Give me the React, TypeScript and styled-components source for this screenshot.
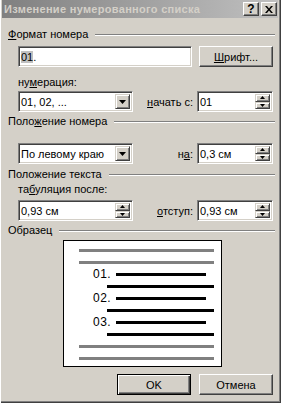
import styled, { createGlobalStyle } from "styled-components";

const GlobalStyle = createGlobalStyle`
  html, body { margin: 0; padding: 0; background: #d4d0c8; }
  body { font-family: "Liberation Sans", Arial, sans-serif; font-size: 11px; color: #000; }
`;

const Window = styled.div`
  width: 281px;
  height: 403px;
  box-sizing: border-box;
  padding: 0 3px 3px 2px;
  background: #d4d0c8;
  box-shadow: inset 1px 0 0 #fff, inset -1px -1px 0 #404040, inset -2px -2px 0 #808080;
  display: flex;
  flex-direction: column;
`;

const TitleBar = styled.div`
  height: 18px;
  display: flex;
  align-items: center;
  padding: 0 1px 0 2px;
  background: linear-gradient(to right, #808080, #c0c0c0);
  color: #d4d0c8;
  font-weight: bold;
  font-size: 11px;
`;

const TitleText = styled.div`
  flex: 1;
  white-space: nowrap;
  letter-spacing: 0.3px;
`;

const CaptionButton = styled.div<{ $gap?: number }>`
  width: 16px;
  height: 14px;
  box-sizing: border-box;
  margin-left: ${(p) => p.$gap ?? 0}px;
  background: #d4d0c8;
  border: 1px solid;
  border-color: #fff #404040 #404040 #fff;
  box-shadow: inset -1px -1px 0 #808080;
  display: flex;
  align-items: center;
  justify-content: center;
  color: #000;
  font-size: 12px;
  font-weight: bold;
`;

const Body = styled.div`
  flex: 1;
  display: flex;
  flex-direction: column;
  padding: 0 5px 0 6px;
`;

const GroupHeader = styled.div<{ $top: number }>`
  display: flex;
  align-items: center;
  height: 13px;
  line-height: 13px;
  margin-top: ${(p) => p.$top}px;
  margin-right: -2px;
  white-space: nowrap;
`;

const Etched = styled.div`
  flex: 1;
  height: 0;
  margin-left: 7px;
  border-top: 1px solid #808080;
  border-bottom: 1px solid #fff;
`;

const Label = styled.div<{ $top?: number }>`
  height: 13px;
  line-height: 13px;
  margin-top: ${(p) => p.$top ?? 0}px;
  margin-left: 10px;
  white-space: nowrap;
`;

const Row = styled.div<{ $top: number }>`
  display: flex;
  align-items: center;
  justify-content: space-between;
  margin-top: ${(p) => p.$top}px;
  margin-left: 10px;
`;

const Pair = styled.div`
  display: flex;
  align-items: center;
  gap: 4px;
`;

const Field = styled.div<{ $w: number }>`
  position: relative;
  width: ${(p) => p.$w}px;
  height: 21px;
  box-sizing: border-box;
  background: #fff;
  border: 1px solid;
  border-color: #808080 #fff #fff #808080;
  box-shadow: inset 1px 1px 0 #404040, inset -1px -1px 0 #d4d0c8;
  display: flex;
  align-items: center;
  padding-left: 2px;
  white-space: nowrap;
`;

const Selected = styled.span`
  background: #c0c0c0;
`;

const FieldButton = styled.div`
  position: absolute;
  right: 2px;
  top: 2px;
  bottom: 2px;
  width: 15px;
  box-sizing: border-box;
  background: #d4d0c8;
  border: 1px solid;
  border-color: #d4d0c8 #404040 #404040 #d4d0c8;
  box-shadow: inset 1px 1px 0 #fff, inset -1px -1px 0 #808080;
  display: flex;
  align-items: center;
  justify-content: center;
`;

const SpinBox = styled.div`
  position: absolute;
  right: 2px;
  top: 2px;
  bottom: 2px;
  width: 15px;
  display: flex;
  flex-direction: column;
`;

const SpinHalf = styled.div`
  flex: 1;
  box-sizing: border-box;
  background: #d4d0c8;
  border: 1px solid;
  border-color: #d4d0c8 #404040 #404040 #d4d0c8;
  box-shadow: inset 1px 1px 0 #fff, inset -1px -1px 0 #808080;
  display: flex;
  align-items: center;
  justify-content: center;
`;

const PushButton = styled.div<{ $default?: boolean }>`
  width: 74px;
  height: 21px;
  box-sizing: border-box;
  background: #d4d0c8;
  border: 1px solid;
  border-color: ${(p) => (p.$default ? "#000" : "#fff #404040 #404040 #fff")};
  box-shadow: ${(p) =>
    p.$default
      ? "inset 1px 1px 0 #fff, inset -1px -1px 0 #404040, inset -2px -2px 0 #808080"
      : "inset -1px -1px 0 #808080"};
  display: flex;
  align-items: center;
  justify-content: center;
`;

const Key = styled.span`
  text-decoration: underline;
`;

const Preview = styled.div`
  width: 159px;
  height: 127px;
  box-sizing: border-box;
  margin: 3px 0 0 55px;
  background: #fff;
  border: 1px solid #000;
  padding-top: 3px;
  display: flex;
  flex-direction: column;
`;

const PreviewRow = styled.div`
  height: 12px;
  display: flex;
  align-items: center;
`;

const Bar = styled.div<{ $from: number; $to: number; $grey?: boolean }>`
  height: 3px;
  margin-left: ${(p) => p.$from}px;
  width: ${(p) => p.$to - p.$from}px;
  background: ${(p) => (p.$grey ? "#808080" : "#000")};
`;

const Num = styled.span`
  margin-left: 29px;
  width: 23px;
  font-size: 12px;
  line-height: 12px;
  letter-spacing: 0.5px;
`;

const Footer = styled.div`
  display: flex;
  justify-content: flex-end;
  gap: 8px;
  margin-top: 7px;
`;

const Down = () => (
  <svg width="7" height="4" viewBox="0 0 7 4">
    <path d="M0 0h7L3.5 4z" fill="#000" />
  </svg>
);

const SmallArrow = ({ up }: { up?: boolean }) => (
  <svg width="5" height="3" viewBox="0 0 5 3">
    <path d={up ? "M2.5 0L5 3H0z" : "M0 0h5L2.5 3z"} fill="#000" />
  </svg>
);

const Combo = ({ w, value }: { w: number; value: string }) => (
  <Field $w={w}>
    {value}
    <FieldButton>
      <Down />
    </FieldButton>
  </Field>
);

const Spin = ({ w, value }: { w: number; value: string }) => (
  <Field $w={w}>
    {value}
    <SpinBox>
      <SpinHalf>
        <SmallArrow up />
      </SpinHalf>
      <SpinHalf>
        <SmallArrow />
      </SpinHalf>
    </SpinBox>
  </Field>
);

const PreviewLine = ({ grey }: { grey?: boolean }) => (
  <PreviewRow>
    {grey ? <Bar $from={15} $to={150} $grey /> : <Bar $from={43} $to={150} />}
  </PreviewRow>
);

const PreviewItem = ({ n }: { n: string }) => (
  <PreviewRow>
    <Num>{n}</Num>
    <Bar $from={0} $to={90} />
  </PreviewRow>
);

export default function App() {
  return (
    <>
      <GlobalStyle />
      <Window>
        <TitleBar>
          <TitleText>Изменение нумерованного списка</TitleText>
          <CaptionButton>?</CaptionButton>
          <CaptionButton $gap={2}>
            <svg width="8" height="7" viewBox="0 0 8 7">
              <path d="M0 0h2l2 2.5L6 0h2L5 3.5 8 7H6L4 4.5 2 7H0l3-3.5z" fill="#000" />
            </svg>
          </CaptionButton>
        </TitleBar>
        <Body>
          <GroupHeader $top={10}>
            <span>
              <Key>Ф</Key>ормат номера
            </span>
            <Etched />
          </GroupHeader>
          <Row $top={5}>
            <Field $w={174}>
              <Selected>01</Selected>.
            </Field>
            <PushButton>
              <span>
                <Key>Ш</Key>рифт...
              </span>
            </PushButton>
          </Row>
          <Label $top={9}>
            ну<Key>м</Key>ерация:
          </Label>
          <Row $top={2}>
            <Combo w={115} value="01, 02, ..." />
            <Pair>
              <span>
                <Key>н</Key>ачать с:
              </span>
              <Spin w={76} value="01" />
            </Pair>
          </Row>
          <GroupHeader $top={3}>
            <span>
              Поло<Key>ж</Key>ение номера
            </span>
            <Etched />
          </GroupHeader>
          <Row $top={15}>
            <Combo w={115} value="По левому краю" />
            <Pair>
              <span>
                н<Key>а</Key>:
              </span>
              <Spin w={76} value="0,3 см" />
            </Pair>
          </Row>
          <GroupHeader $top={4}>
            <span>Положение текста</span>
            <Etched />
          </GroupHeader>
          <Label $top={2}>
            та<Key>б</Key>уляция после:
          </Label>
          <Row $top={4}>
            <Spin w={115} value="0,93 см" />
            <Pair>
              <span>
                <Key>о</Key>тступ:
              </span>
              <Spin w={76} value="0,93 см" />
            </Pair>
          </Row>
          <GroupHeader $top={3}>
            <span>Образец</span>
            <Etched />
          </GroupHeader>
          <Preview>
            <PreviewLine grey />
            <PreviewLine grey />
            <PreviewItem n="01." />
            <PreviewLine />
            <PreviewItem n="02." />
            <PreviewLine />
            <PreviewItem n="03." />
            <PreviewLine />
            <PreviewLine grey />
            <PreviewLine grey />
          </Preview>
          <Footer>
            <PushButton $default>OK</PushButton>
            <PushButton>Отмена</PushButton>
          </Footer>
        </Body>
      </Window>
    </>
  );
}
